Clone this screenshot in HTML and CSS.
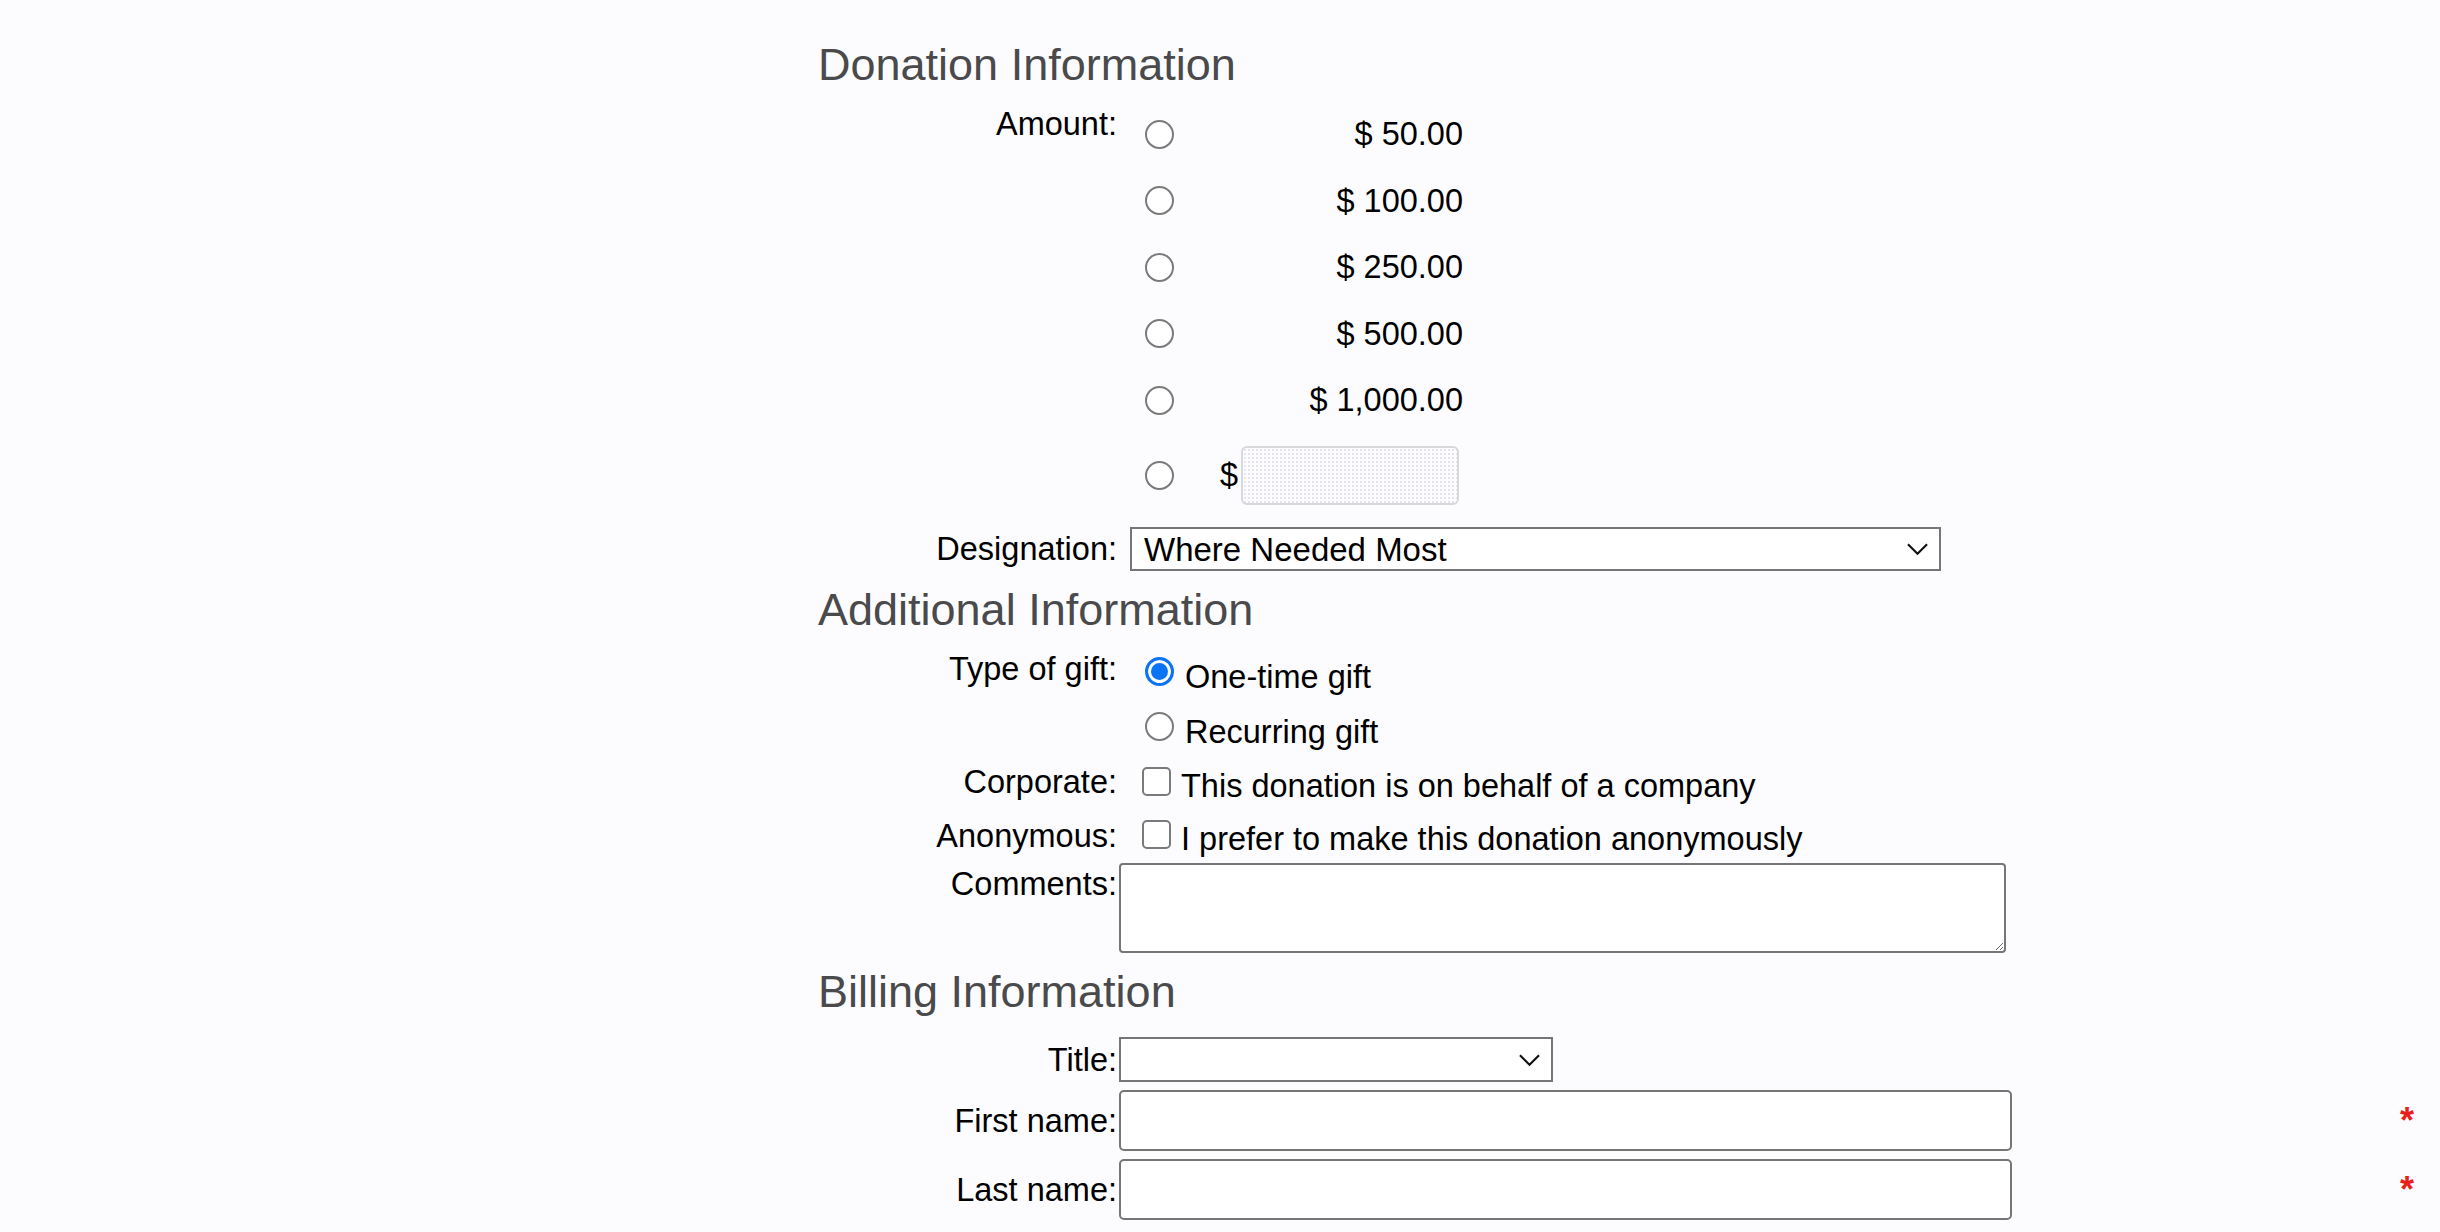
FILE: index.html
```html
<!DOCTYPE html>
<html lang="en">
<head>
    <meta charset="UTF-8">
    <title>Donation</title>
    <link rel="stylesheet" href="styles.css">
</head>
<body>
    <form class="donation">
        <h2 class="section">Donation Information</h2>

        <div class="row row-amount">
            <label class="lbl lbl-top">Amount:</label>
            <div class="amounts">
                <label class="amt"><input type="radio" name="amount" class="radio"><span>$ 50.00</span></label>
                <label class="amt"><input type="radio" name="amount" class="radio"><span>$ 100.00</span></label>
                <label class="amt"><input type="radio" name="amount" class="radio"><span>$ 250.00</span></label>
                <label class="amt"><input type="radio" name="amount" class="radio"><span>$ 500.00</span></label>
                <label class="amt"><input type="radio" name="amount" class="radio"><span>$ 1,000.00</span></label>
                <div class="amt amt-other">
                    <input type="radio" name="amount" class="radio">
                    <span class="cur">$</span>
                    <input type="text" class="other">
                </div>
            </div>
        </div>

        <div class="row row-center row-designation">
            <label class="lbl">Designation:</label>
            <div class="select-wrap sel-designation">
                <select class="sel">
                    <option>Where Needed Most</option>
                </select>
                <svg class="chev" viewBox="0 0 22 12"><path d="M1 1l10 10 10-10" fill="none" stroke="#111" stroke-width="2.2"/></svg>
            </div>
        </div>

        <h2 class="section section-2">Additional Information</h2>

        <div class="row row-gift">
            <label class="lbl">Type of gift:</label>
            <div class="opts">
                <label class="opt"><input type="radio" name="gift" class="radio" checked>One-time gift</label>
                <label class="opt"><input type="radio" name="gift" class="radio">Recurring gift</label>
            </div>
        </div>

        <div class="row row-check">
            <label class="lbl">Corporate:</label>
            <label class="chk chk-corp"><input type="checkbox" class="box">This donation is on behalf of a company</label>
        </div>

        <div class="row row-check">
            <label class="lbl">Anonymous:</label>
            <label class="chk chk-anon"><input type="checkbox" class="box">I prefer to make this donation anonymously</label>
        </div>

        <div class="row row-comments">
            <label class="lbl lbl-comments">Comments:</label>
            <div><textarea class="comments"></textarea></div>
        </div>

        <h2 class="section section-3">Billing Information</h2>

        <div class="row row-center row-title">
            <label class="lbl">Title:</label>
            <div class="select-wrap sel-title">
                <select class="sel">
                    <option></option>
                    <option>Mr.</option>
                    <option>Mrs.</option>
                    <option>Ms.</option>
                    <option>Dr.</option>
                </select>
                <svg class="chev" viewBox="0 0 22 12"><path d="M1 1l10 10 10-10" fill="none" stroke="#111" stroke-width="2.2"/></svg>
            </div>
        </div>

        <div class="row row-center row-name">
            <label class="lbl">First name:</label>
            <div><input type="text" class="txt"></div>
            <span class="req">*</span>
        </div>

        <div class="row row-center row-name">
            <label class="lbl">Last name:</label>
            <div><input type="text" class="txt"></div>
            <span class="req">*</span>
        </div>
    </form>
</body>
</html>
```

FILE: styles.css
```css
body {
    margin: 0;
    background: #fcfcfe;
    font-family: "Liberation Sans", Arial, sans-serif;
    font-size: 32.5px;
    color: #000;
}
.donation {
    margin-left: 818px;
    width: 1607px;
    padding-top: 40px;
}
.section {
    margin: 0;
    font-size: 45px;
    font-weight: 400;
    line-height: 50px;
    color: #4a4a4c;
}
.section-2 {
    margin-top: 14px;
}
.section-3 {
    margin-top: 14px;
}
.row {
    display: grid;
    grid-template-columns: 301px 1fr 36px;
    align-items: start;
    line-height: 36px;
}
.row-center {
    align-items: center;
}
.lbl {
    text-align: right;
    padding-right: 2px;
}
.lbl-top {
    padding-top: 7px;
}
.lbl-comments {
    padding-top: 3px;
}

/* montants */
.row-amount {
    margin-top: 9px;
}
.amounts {
    width: 344px;
    padding-top: 2px;
}
.amt {
    display: flex;
    align-items: center;
    height: 66.5px;
}
.amt span {
    flex: 1;
    text-align: right;
}
.amt-other {
    height: 83px;
}
.amt-other .cur {
    flex: none;
    margin-left: 46px;
}
.other {
    width: 218px;
    height: 59px;
    box-sizing: border-box;
    margin-left: 3px;
    border: 2px solid #d8d8dc;
    border-radius: 6px;
    background-color: #fdfdff;
    background-image: radial-gradient(#e4e4ec 1px, transparent 1px);
    background-size: 4px 4px;
    outline: none;
}

/* radios et cases */
.radio {
    appearance: none;
    width: 29px;
    height: 29px;
    margin: 0 0 0 26px;
    flex: none;
    border: 2px solid #7a7a7a;
    border-radius: 50%;
    background: #fff;
}
.radio:checked {
    border: 3px solid #0a74f4;
    background: #0a74f4;
    box-shadow: inset 0 0 0 3px #fff;
}
.box {
    appearance: none;
    width: 29px;
    height: 29px;
    margin: -1px 10px 0 23px;
    flex: none;
    border: 2px solid #7a7a7a;
    border-radius: 5px;
    background: #fff;
}

/* designation / title */
.row-designation {
    margin-top: 10.5px;
}
.select-wrap {
    position: relative;
}
.sel {
    appearance: none;
    display: block;
    width: 100%;
    box-sizing: border-box;
    border: 2px solid #767676;
    border-radius: 0;
    background: #fff;
    font-family: "Liberation Sans", Arial, sans-serif;
    font-size: 33px;
    color: #000;
    padding: 0 12px;
    outline: none;
}
.sel-designation {
    margin-left: 11px;
    width: 811px;
}
.sel-designation .sel {
    height: 44px;
}
.sel-title {
    width: 434px;
}
.sel-title .sel {
    height: 45px;
}
.chev {
    position: absolute;
    right: 13px;
    top: 50%;
    width: 21px;
    height: 12px;
    margin-top: -6px;
    pointer-events: none;
}

/* type de don */
.row-gift {
    margin-top: 16px;
}
.opts {
    padding-top: 8px;
}
.opt {
    display: flex;
    align-items: flex-start;
    height: 36px;
}
.opt + .opt {
    margin-top: 19px;
}
.opt .radio {
    margin-top: -2px;
    margin-right: 11px;
}

.row-check {
    margin-top: 14px;
}
.chk {
    display: flex;
    align-items: flex-start;
}
.chk-corp {
    padding-top: 4px;
}
.chk-anon {
    padding-top: 3px;
}

.row-comments {
    margin-top: 6px;
}
.comments {
    display: block;
    width: 887px;
    height: 90px;
    box-sizing: border-box;
    border: 2px solid #767676;
    border-radius: 4px;
    background: #fff;
    font-family: "Liberation Sans", Arial, sans-serif;
    font-size: 32px;
}

/* facturation */
.row-title {
    margin-top: 20px;
}
.row-name {
    margin-top: 8px;
}
.txt {
    display: block;
    width: 893px;
    height: 61px;
    box-sizing: border-box;
    border: 2px solid #767676;
    border-radius: 5px;
    background: #fff;
    font-family: "Liberation Sans", Arial, sans-serif;
    font-size: 32px;
    padding: 0 10px;
}
.req {
    color: #e8201a;
    font-weight: 700;
    font-size: 36px;
    text-align: center;
}
```
